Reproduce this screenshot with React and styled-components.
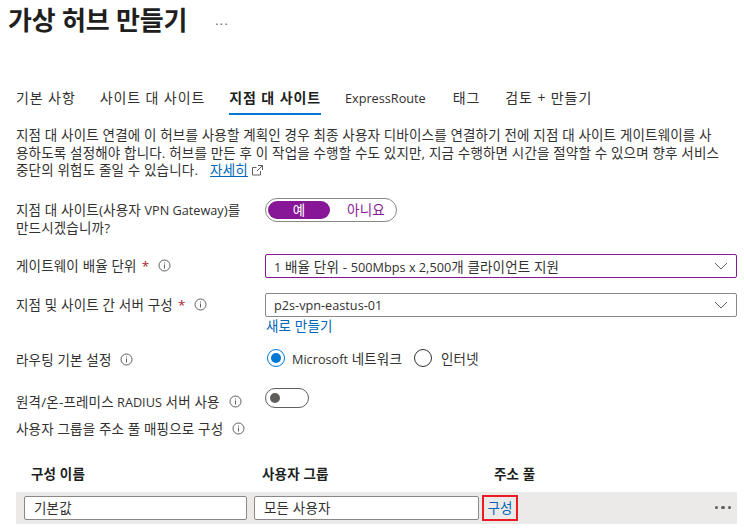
import React from "react";
import styled, { createGlobalStyle } from "styled-components";

const Global = createGlobalStyle`
  html, body { margin: 0; padding: 0; background: #fff; }
  body { width: 744px; height: 529px; overflow: hidden; font-family: "Open Sans", "Noto Sans CJK KR", sans-serif; color: #323130; font-size: 13.5px; letter-spacing: 0.17px; }
`;

const Page = styled.div`
  display: flex; flex-direction: column; width: 744px; height: 529px; overflow: hidden;
`;
const L = styled.span`
  font-size: 12.7px; letter-spacing: 0;
`;
const TitleBar = styled.div`
  display: flex; align-items: center; height: 40px; padding-left: 8px; gap: 28px;
`;
const Title = styled.h1`
  margin: 0; font-size: 26px; font-weight: 700; color: #201f1e; line-height: 40px; letter-spacing: -0.2px;
`;
const More = styled.span`
  font-size: 12px; color: #605e5c; letter-spacing: 1.5px; line-height: 1; margin-top: 2px;
`;
const Tabs = styled.nav`
  display: flex; margin: 42px 0 0 16px; height: 33px; font-size: 14px; letter-spacing: 0.9px;
`;
const Tab = styled.div`
  margin-right: ${p => p.$gap}px; height: 31px; line-height: 31px; white-space: nowrap;
  font-weight: ${p => p.$active ? 700 : 400};
  color: ${p => p.$active ? "#201f1e" : "#323130"};
  border-bottom: ${p => p.$active ? "2px solid #0078d4" : "2px solid transparent"};
`;
const Intro = styled.p`
  margin: 12px 0 0 16px; line-height: 17.5px; white-space: nowrap;
`;
const A = styled.a`
  color: #0066b8; text-decoration: underline; margin-left: 12px;
`;
const External = styled.svg`
  width: 11px; height: 11px; margin-left: 4px; vertical-align: -1px; fill: none; stroke: #605e5c; stroke-width: 1;
`;
const Form = styled.div`
  display: flex; flex-direction: column; padding: 0 7px 0 16px;
`;
const Row = styled.div`
  display: grid; grid-template-columns: 249px 1fr; align-items: ${p => p.$align || "center"};
  margin-top: ${p => p.$top}px; min-height: ${p => p.$h}px;
`;
const Label = styled.div`
  line-height: 18px; white-space: nowrap; display: flex; align-items: center;
  padding-top: ${p => p.$drop || 0}px;
`;
const LabelBlock = styled.div`
  line-height: 18px; white-space: nowrap; padding-top: 3px;
`;
const Star = styled.span`
  color: #a4262c; margin-left: 5px;
`;
const Info = styled.svg`
  width: 13px; height: 13px; margin-left: 9px; flex: none;
  fill: none; stroke: #605e5c;
`;
const Pill = styled.div`
  display: flex; width: 132px; height: 24px; box-sizing: border-box; border: 1px solid #8a8886; border-radius: 12px; padding: 2px;
`;
const PillOption = styled.div`
  flex: none; width: ${p => p.$w}px; height: 18px; line-height: 18px; text-align: center; border-radius: 9px;
  background: ${p => p.$on ? "#881798" : "transparent"};
  color: ${p => p.$on ? "#fff" : "#881798"};
`;
const Select = styled.div`
  display: flex; align-items: center; justify-content: space-between; box-sizing: border-box;
  height: 24px; padding: 0 8px 0 8px; border-radius: 2px; background: #fff;
  border: 1px solid ${p => p.$active ? "#881798" : "#8a8886"}; color: #323130;
`;
const Chevron = styled.svg`
  width: 14px; height: 8px; fill: none; stroke: #605e5c; stroke-width: 1;
`;
const NewLink = styled.div`
  color: #0066b8; line-height: 18px; margin: 0 0 0 1px;
`;
const Radios = styled.div`
  display: flex; align-items: center; padding-left: 2px;
`;
const Radio = styled.span`
  box-sizing: border-box; width: 18px; height: 18px; border-radius: 50%;
  border: 1px solid ${p => p.$on ? "#0078d4" : "#323130"}; display: flex; align-items: center; justify-content: center;
  margin-right: ${p => p.$gap}px; flex: none;
  &::after { content: ""; width: 10px; height: 10px; border-radius: 50%; background: ${p => p.$on ? "#0078d4" : "transparent"}; }
`;
const RadioText = styled.span`
  margin-right: ${p => p.$mr || 0}px; white-space: nowrap;
`;
const Toggle = styled.div`
  box-sizing: border-box; width: 44px; height: 20px; border: 1px solid #605e5c; border-radius: 10px;
  display: flex; align-items: center; padding-left: 4px;
  &::before { content: ""; width: 10px; height: 10px; border-radius: 50%; background: #605e5c; }
`;
const TableHead = styled.div`
  display: grid; grid-template-columns: 231px 232px 1fr; margin: 27px 0 0 15px; height: 18px; line-height: 18px;
  font-weight: 600; color: #201f1e;
`;
const TableRow = styled.div`
  display: flex; align-items: center; height: 32px; margin-top: 9px; background: #ebeae9; padding-left: 8px; padding-right: 6px;
`;
const Input = styled.div`
  box-sizing: border-box; width: ${p => p.$w}px; height: 24px; line-height: 22px; margin-right: ${p => p.$mr}px;
  padding-left: 9px; background: #fff; border: 1px solid #8a8886; border-radius: 2px;
`;
const Highlight = styled.div`
  box-sizing: border-box; width: 36px; height: 26px; border: 2px solid #ed1c24; color: #0066b8; text-align: center; line-height: 22px;
`;
const Dots = styled.div`
  margin-left: auto; display: flex; gap: 3px;
  & span { width: 3.5px; height: 3.5px; border-radius: 50%; background: #605e5c; }
`;

const InfoIcon = () => (
  <Info viewBox="0 0 13 13">
    <circle cx="6.5" cy="6.5" r="5.5" />
    <path d="M6.5 5.5v4M6.5 3.5v1" />
  </Info>
);
const Arrow = () => (
  <Chevron viewBox="0 0 14 8"><path d="M1 1l6 6 6-6" /></Chevron>
);

export default function App() {
  return (
    <Page>
      <Global />
      <TitleBar>
        <Title>가상 허브 만들기</Title>
        <More>...</More>
      </TitleBar>
      <Tabs>
        <Tab $gap={24}>기본 사항</Tab>
        <Tab $gap={24}>사이트 대 사이트</Tab>
        <Tab $gap={24} $active>지점 대 사이트</Tab>
        <Tab $gap={27}><L>ExpressRoute</L></Tab>
        <Tab $gap={25}>태그</Tab>
        <Tab $gap={0}>검토 + 만들기</Tab>
      </Tabs>
      <Intro>
        지점 대 사이트 연결에 이 허브를 사용할 계획인 경우 최종 사용자 디바이스를 연결하기 전에 지점 대 사이트 게이트웨이를 사<br />
        용하도록 설정해야 합니다. 허브를 만든 후 이 작업을 수행할 수도 있지만, 지금 수행하면 시간을 절약할 수 있으며 향후 서비스<br />
        중단의 위험도 줄일 수 있습니다.
        <A href="#">자세히</A>
        <External viewBox="0 0 11 11"><path d="M8.5 6v4h-8V2.5h4M6 .5h4.5V5M10.5.5L5 6" /></External>
      </Intro>
      <Form>
        <Row $top={18} $h={39} $align="start">
          <LabelBlock>지점 대 사이트(사용자 <L>VPN Gateway</L>)를<br />만드시겠습니까?</LabelBlock>
          <Pill>
            <PillOption $on $w={62}>예</PillOption>
            <PillOption $w={72}>아니요</PillOption>
          </Pill>
        </Row>
        <Row $top={17} $h={24}>
          <Label>게이트웨이 배율 단위<Star>*</Star><InfoIcon /></Label>
          <Select $active><span><L>1</L> 배율 단위 - <L>500Mbps x 2,500</L>개 클라이언트 지원</span><Arrow /></Select>
        </Row>
        <Row $top={15} $h={24}>
          <Label>지점 및 사이트 간 서버 구성<Star>*</Star><InfoIcon /></Label>
          <Select><L>p2s-vpn-eastus-01</L><Arrow /></Select>
        </Row>
        <Row $top={0} $h={19} $align="start">
          <span />
          <NewLink>새로 만들기</NewLink>
        </Row>
        <Row $top={12} $h={18} $align="start">
          <Label $drop={3}>라우팅 기본 설정<InfoIcon /></Label>
          <Radios>
            <Radio $on $gap={7} /><RadioText $mr={12}><L>Microsoft</L> 네트워크</RadioText>
            <Radio $gap={9} /><RadioText>인터넷</RadioText>
          </Radios>
        </Row>
        <Row $top={19} $h={23} $align="start">
          <Label $drop={5}>원격/온-프레미스 <L>&nbsp;RADIUS</L>&nbsp;서버 사용<InfoIcon /></Label>
          <Toggle />
        </Row>
        <Row $top={9} $h={18}>
          <Label>사용자 그룹을 주소 풀 매핑으로 구성<InfoIcon /></Label>
        </Row>
        <TableHead>
          <span>구성 이름</span>
          <span>사용자 그룹</span>
          <span>주소 풀</span>
        </TableHead>
        <TableRow>
          <Input $w={223} $mr={7}>기본값</Input>
          <Input $w={225} $mr={3}>모든 사용자</Input>
          <Highlight>구성</Highlight>
          <Dots><span /><span /><span /></Dots>
        </TableRow>
      </Form>
    </Page>
  );
}
